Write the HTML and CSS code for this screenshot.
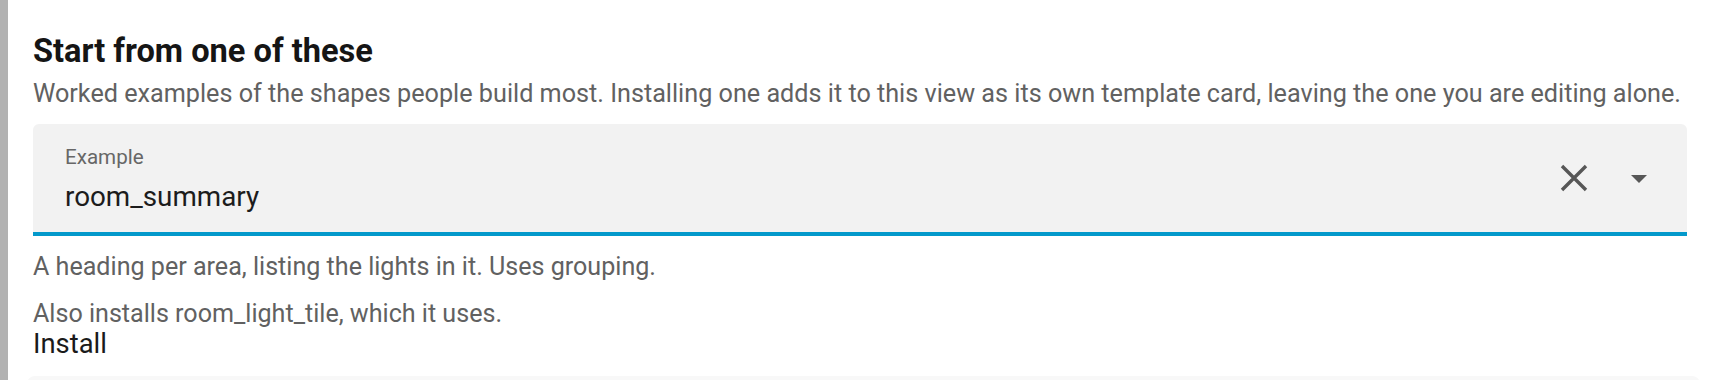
FILE: index.html
```html
<!DOCTYPE html>
<html lang="en">
<head>
    <meta charset="UTF-8">
    <title>Start from one of these</title>
    <link rel="stylesheet" href="styles.css">
</head>
<body>
    <section id="wrap">
        <div class="rail"></div>
        <div class="main">
            <h2 class="title">Start from one of these</h2>
            <p class="desc">Worked examples of the shapes people build most. Installing one adds it to this view as its own template card, leaving the one you are editing alone.</p>

            <div class="combo">
                <div class="field">
                    <div class="label">Example</div>
                    <div class="value">room_summary</div>
                </div>
                <span class="clear">
                    <svg width="28" height="28" viewBox="0 0 28 28">
                        <path d="M2 2L26 26M26 2L2 26" stroke="#575757" stroke-width="3.4" fill="none" />
                    </svg>
                </span>
                <span class="toggle">
                    <svg width="16" height="8" viewBox="0 0 16 8">
                        <path d="M0 0H16L8 8Z" fill="#575757" />
                    </svg>
                </span>
            </div>

            <p class="help">A heading per area, listing the lights in it. Uses grouping.</p>
            <p class="also">Also installs room_light_tile, which it uses.</p>
            <a class="install" href="javascript:;">Install</a>

            <div class="next"></div>
        </div>
    </section>
</body>
</html>
```

FILE: styles.css
```css
/*reset*/
html,body{margin: 0;padding: 0;background: #fff;}
h2,p{margin: 0;padding: 0;}
a{text-decoration: none;display: block;}
body{font-family: Roboto, "Liberation Sans", sans-serif;height: 380px;overflow: hidden;}

#wrap{
    display: flex;
    height: 380px;
}

#wrap .rail{
    width: 8px;
    flex: none;
    background: #b2b2b2;
}

#wrap .main{
    flex: 1;
    padding: 32px 31px 0 25px;
}

.main .title{
    font-size: 32.6px;
    line-height: 38px;
    font-weight: 700;
    color: #151515;
}

.main .desc{
    margin-top: 9px;
    font-size: 25.2px;
    line-height: 30px;
    color: #616161;
    white-space: nowrap;
}

.main .combo{
    margin-top: 15px;
    height: 108px;
    background: #f2f2f2;
    border-radius: 6px 6px 0 0;
    border-bottom: 4px solid #0399cb;
    display: flex;
    align-items: center;
    padding: 0 40px 0 32px;
}

.combo .field{
    flex: 1;
    align-self: flex-start;
    padding-top: 21px;
}

.combo .label{
    font-size: 20.6px;
    line-height: 24px;
    color: #676767;
}

.combo .value{
    margin-top: 12px;
    font-size: 27.8px;
    line-height: 32px;
    color: #1c1c1c;
}

.combo .clear{
    display: flex;
    margin-right: 43px;
}

.combo .toggle{
    display: flex;
    margin-top: 2px;
}

.main .help{
    margin-top: 16px;
    font-size: 25.1px;
    line-height: 30px;
    color: #616161;
}

.main .also{
    margin-top: 17px;
    font-size: 25.1px;
    line-height: 30px;
    color: #616161;
}

.main .install{
    margin-top: -1px;
    font-size: 27.4px;
    line-height: 32px;
    color: #1a1a1a;
}

.main .next{
    margin: 16px -13px 0 -6px;
    height: 20px;
    background: #f8f8f8;
    border-radius: 8px 8px 0 0;
}
```
